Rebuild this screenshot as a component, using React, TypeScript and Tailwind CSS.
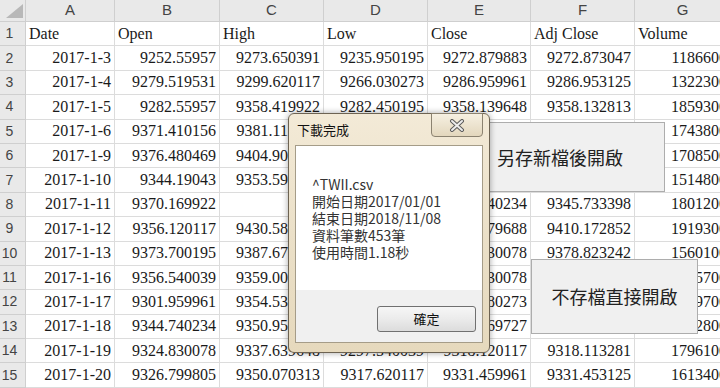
import React from 'react';

const cols = ['A', 'B', 'C', 'D', 'E', 'F', 'G'];
const widths = ['w-[89px]', 'w-[105px]', 'w-[104px]', 'w-[104px]', 'w-[103px]', 'w-[104px]', 'w-[96px]'];

const rows: string[][] = [
  ['Date', 'Open', 'High', 'Low', 'Close', 'Adj Close', 'Volume'],
  ['2017-1-3', '9252.55957', '9273.650391', '9235.950195', '9272.879883', '9272.873047', '1186600'],
  ['2017-1-4', '9279.519531', '9299.620117', '9266.030273', '9286.959961', '9286.953125', '1322300'],
  ['2017-1-5', '9282.55957', '9358.419922', '9282.450195', '9358.139648', '9358.132813', '1859300'],
  ['2017-1-6', '9371.410156', '9381.110352', '9341.250000', '9381.110352', '9381.103516', '1743800'],
  ['2017-1-9', '9376.480469', '9404.900391', '9349.740234', '9353.589844', '9353.583008', '1708500'],
  ['2017-1-10', '9344.19043', '9353.599609', '9306.169922', '9330.780273', '9330.773438', '1514800'],
  ['2017-1-11', '9370.169922', '', '9345.740234', '9345.740234', '9345.733398', '1801200'],
  ['2017-1-12', '9356.120117', '9430.580078', '9356.120117', '9410.179688', '9410.172852', '1919300'],
  ['2017-1-13', '9373.700195', '9387.679688', '9340.400391', '9378.830078', '9378.823242', '1560100'],
  ['2017-1-16', '9356.540039', '9359.000000', '9300.919922', '9310.830078', '9310.823242', '1535700'],
  ['2017-1-17', '9301.959961', '9354.530273', '9281.429688', '9331.080273', '9331.073438', '1569700'],
  ['2017-1-18', '9344.740234', '9350.950195', '9298.269531', '9302.469727', '9302.462891', '1612800'],
  ['2017-1-19', '9324.830078', '9337.639648', '9297.540039', '9318.120117', '9318.113281', '1796100'],
  ['2017-1-20', '9326.799805', '9350.070313', '9317.620117', '9331.459961', '9331.453125', '1613400'],
];

function Corner() {
  return (
    <div className="w-[26px] h-[22px] shrink-0 bg-[#e9e9e9] border-r border-b border-[#cfcfcf] flex items-end justify-end pr-[2px] pb-[3px]">
      <svg width="17" height="14" viewBox="0 0 17 14">
        <polygon points="17,0 17,14 0,14" fill="#b8b8b8" />
      </svg>
    </div>
  );
}

function Sheet() {
  return (
    <div className="flex flex-col font-['Liberation_Serif','Noto_Sans_CJK_TC',serif] text-[16px] text-[#1a1a1a]">
      <div className="flex h-[22px]">
        <Corner />
        {cols.map((c, i) => (
          <div
            key={c}
            className={`${widths[i]} shrink-0 h-[22px] bg-[#e9e9e9] border-r border-b border-[#cfcfcf] flex items-center justify-center font-['Liberation_Sans',sans-serif] text-[15px] text-[#444]`}
          >
            {c}
          </div>
        ))}
      </div>
      {rows.map((r, ri) => (
        <div key={ri} className="flex h-[24.4px]">
          <div className="w-[26px] shrink-0 bg-[#e9e9e9] border-r border-b border-[#cfcfcf] flex items-center justify-center pr-[6px] font-['Liberation_Sans',sans-serif] text-[14px] text-[#444]">
            {ri + 1}
          </div>
          {r.map((v, ci) => (
            <div
              key={ci}
              className={`${widths[ci]} shrink-0 border-r border-b border-[#dcdcdc] flex items-center overflow-hidden whitespace-nowrap ${
                ri === 0 ? 'justify-start pl-[3px]' : 'justify-end pr-[3px]'
              }`}
            >
              {v}
            </div>
          ))}
        </div>
      ))}
    </div>
  );
}

function CloseGlyph() {
  return (
    <svg width="16" height="13" viewBox="0 0 16 13">
      <path d="M3 2 L13 11 M13 2 L3 11" stroke="#5b5b5b" strokeWidth="4" strokeLinecap="round" />
      <path d="M3 2 L13 11 M13 2 L3 11" stroke="#ececec" strokeWidth="2" strokeLinecap="round" />
    </svg>
  );
}

function Dialog() {
  return (
    <div className="absolute left-[288px] top-[113px] w-[202px] h-[240px] flex flex-col rounded-[6px] border border-[#6d6352] bg-gradient-to-b from-[#f3ead7] via-[#ebe0c8] to-[#e6d9bd] shadow-[0_0_6px_rgba(0,0,0,0.35)] font-['Noto_Sans_CJK_TC',sans-serif]">
      <div className="h-[31px] flex justify-between">
        <div className="pl-[8px] pt-[8px] text-[13px] leading-[16px] text-[#111]">下載完成</div>
        <div className="mr-[6px] w-[52px] h-[24px] -mt-px rounded-b-[4px] border border-[#8b8270] bg-gradient-to-b from-[#f6f0e2] to-[#e3d7bd] flex items-center justify-center">
          <CloseGlyph />
        </div>
      </div>
      <div className="flex-1 mx-[6px] mb-[9px] border border-[#a59c88] bg-white flex flex-col">
        <div className="flex-1 pl-[16px] pt-[30px] text-[14px] leading-[17px] text-[#333]">
          <div>^TWII.csv</div>
          <div>開始日期2017/01/01</div>
          <div>結束日期2018/11/08</div>
          <div>資料筆數453筆</div>
          <div>使用時間1.18秒</div>
        </div>
        <div className="h-[52px] bg-[#f0f0f0] flex items-end justify-end pr-[6px] pb-[10px]">
          <div className="w-[99px] h-[26px] rounded-[3px] border border-[#707070] bg-gradient-to-b from-[#f6f6f6] via-[#ebebeb] to-[#dcdcdc] flex items-center justify-center text-[13px] text-[#111]">
            確定
          </div>
        </div>
      </div>
    </div>
  );
}

export default function App() {
  return (
    <div className="relative w-[720px] h-[388px] overflow-hidden bg-white">
      <Sheet />
      <div className="absolute left-[455px] top-[122px] w-[210px] h-[70px] bg-[#f0f0f0] border border-[#adadad] flex items-center justify-center font-['Noto_Sans_CJK_TC',sans-serif] text-[18px] text-[#222]">
        另存新檔後開啟
      </div>
      <Dialog />
      <div className="absolute left-[531px] top-[259px] w-[167px] h-[75px] bg-[#f0f0f0] border border-[#adadad] flex items-center justify-center font-['Noto_Sans_CJK_TC',sans-serif] text-[18px] text-[#222]">
        不存檔直接開啟
      </div>
    </div>
  );
}
